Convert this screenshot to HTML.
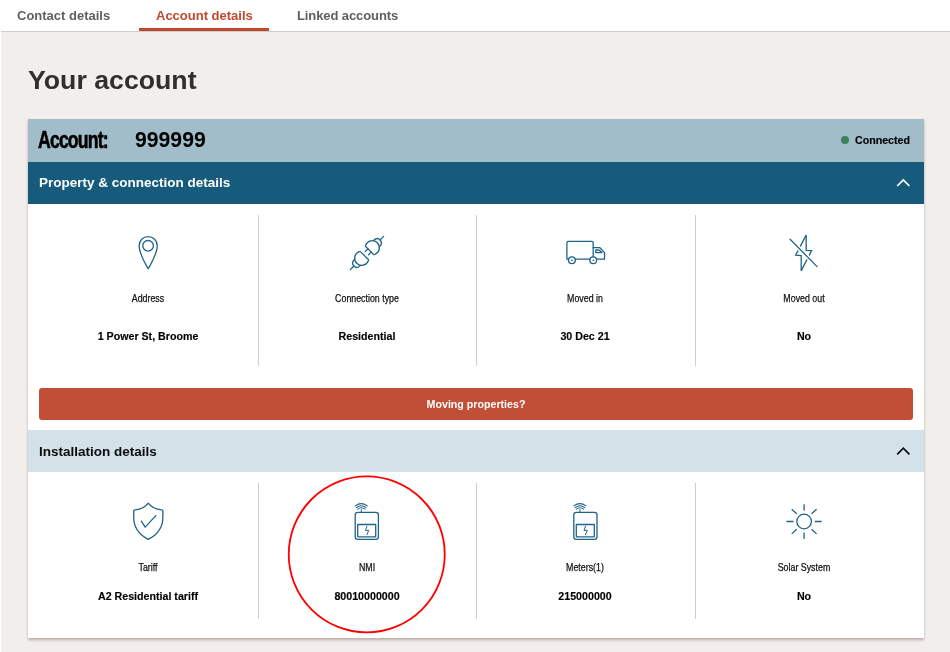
<!DOCTYPE html>
<html lang="en">
<head>
<meta charset="utf-8">
<title>Your account</title>
<style>
*{box-sizing:border-box;margin:0;padding:0}
html,body{width:950px;height:652px;overflow:hidden}
body{background:#f2eeeb;font-family:"Liberation Sans",Arial,sans-serif;color:#1a1a1a;position:relative}
.page{position:absolute;left:0;top:0;width:950px;height:652px;will-change:transform}
.nav{position:absolute;left:0;top:0;width:950px;height:32px;background:#fff;border-bottom:1px solid #cccfcf}
.nav a{position:absolute;top:1px;height:30px;line-height:30px;font-weight:bold;font-size:13px;color:#5e5f60;text-decoration:none;white-space:nowrap}
.nav a.active{color:#c04a30}
.nav .ul{position:absolute;left:139px;top:28px;width:130px;height:3px;background:#c04a30}
h1{position:absolute;left:28px;top:64px;font-size:26.7px;line-height:32px;font-weight:bold;color:#2f2f2f;white-space:nowrap}
.card{position:absolute;left:28px;top:119px;width:896px;height:519px;background:#fff;box-shadow:0 2px 2.5px rgba(70,30,30,.32)}
.acct{position:absolute;left:0;top:0;width:896px;height:43px;background:#a1bdca}
.acct .lbl{position:absolute;left:10px;top:9.1px;font-size:23px;line-height:24px;font-weight:bold;color:#000;transform-origin:0 50%;transform:scaleX(.768);white-space:nowrap;letter-spacing:-1.1px;-webkit-text-stroke:.6px #000}
.acct .num{position:absolute;left:107px;top:9px;font-size:21.2px;line-height:24px;font-weight:bold;color:#000}
.acct .dot{position:absolute;left:813px;top:17.3px;width:8.2px;height:8.2px;border-radius:50%;background:#3b825b}
.acct .st{position:absolute;right:14px;top:14px;font-size:10.67px;line-height:14px;font-weight:bold;color:#000;-webkit-text-stroke:.15px #000}
.hd{position:absolute;left:0;width:896px;height:42px;font-size:13.5px;line-height:42px;font-weight:bold;padding-left:11px}
.hd1{top:43px;background:#165b7c;color:#fff}
.hd2{top:311px;background:#d3e1e9;color:#0c0c0c;line-height:44px}
.hd svg{position:absolute;right:13px;top:15px}
.col{position:absolute;width:218px;text-align:center}
.col .t{position:absolute;left:0;width:100%;font-size:10.4px;line-height:12px;color:#111;transform:scaleX(.85);-webkit-text-stroke:.25px #111}
.col .v{position:absolute;left:0;width:100%;font-size:10.67px;line-height:14px;font-weight:bold;color:#000;-webkit-text-stroke:.15px #000}
.sep{position:absolute;width:1px;background:#c2d2d5}
.btn{position:absolute;left:11px;top:269px;width:874px;height:32px;background:#c14e36;border-radius:3px;color:#fff;font-weight:bold;font-size:10.67px;line-height:33px;text-align:center}
.ico{position:absolute;left:0;top:0}
.edge{position:absolute;left:0;top:0;width:1px;height:652px;background:#fff}
</style>
</head>
<body>
<div class="page">
<div class="nav">
  <a style="left:17px">Contact details</a>
  <a class="active" style="left:156px">Account details</a>
  <a style="left:297px;letter-spacing:-.1px">Linked accounts</a>
  <div class="ul"></div>
</div>
<div class="edge"></div>
<h1>Your account</h1>
<div class="card">
  <div class="acct">
    <span class="lbl">Account:</span><span class="num">999999</span>
    <span class="dot"></span><span class="st">Connected</span>
  </div>
  <div class="hd hd1">Property &amp; connection details
  </div>
  <div class="sep" style="left:230px;top:96px;height:151px"></div>
  <div class="sep" style="left:448px;top:96px;height:151px"></div>
  <div class="sep" style="left:667px;top:96px;height:151px"></div>

  <div class="col" style="left:11px;top:85px;height:174px"><div class="t" style="top:89px">Address</div><div class="v" style="top:125px">1 Power St, Broome</div></div>
  <div class="col" style="left:230px;top:85px;height:174px"><div class="t" style="top:89px">Connection type</div><div class="v" style="top:125px">Residential</div></div>
  <div class="col" style="left:448px;top:85px;height:174px"><div class="t" style="top:89px">Moved in</div><div class="v" style="top:125px">30 Dec 21</div></div>
  <div class="col" style="left:667px;top:85px;height:174px"><div class="t" style="top:89px">Moved out</div><div class="v" style="top:125px">No</div></div>

  <div class="btn">Moving properties?</div>

  <div class="hd hd2">Installation details
  </div>
  <div class="sep" style="left:230px;top:364px;height:136px"></div>
  <div class="sep" style="left:448px;top:364px;height:136px"></div>
  <div class="sep" style="left:667px;top:364px;height:136px"></div>

  <div class="col" style="left:11px;top:353px;height:165px"><div class="t" style="top:90px">Tariff</div><div class="v" style="top:117px">A2 Residential tariff</div></div>
  <div class="col" style="left:230px;top:353px;height:165px"><div class="t" style="top:90px">NMI</div><div class="v" style="top:117px">80010000000</div></div>
  <div class="col" style="left:448px;top:353px;height:165px"><div class="t" style="top:90px">Meters(1)</div><div class="v" style="top:117px">215000000</div></div>
  <div class="col" style="left:667px;top:353px;height:165px"><div class="t" style="top:90px">Solar System</div><div class="v" style="top:117px">No</div></div>
</div>

<svg class="ico" width="950" height="652" viewBox="0 0 950 652" fill="none" stroke="#1f6388" stroke-width="1.3" stroke-linecap="round" stroke-linejoin="round">
  <!-- chevrons -->
  <path d="M897.2 186 L903.3 179.9 L909.4 186" stroke="#fff" stroke-width="1.7" stroke-linecap="butt" stroke-linejoin="miter"/>
  <path d="M897.2 454.4 L903.3 448.2 L909.4 454.4" stroke="#0c0c0c" stroke-width="1.7" stroke-linecap="butt" stroke-linejoin="miter"/>
  <!-- pin -->
  <path d="M148.2 268.8 C144.5 262 139.1 253.5 139.1 245.7 A9.1 9.1 0 0 1 157.3 245.7 C157.3 253.5 151.9 262 148.2 268.8 Z"/>
  <circle cx="148.1" cy="245.8" r="5.3"/>
  <!-- plug -->
  <g transform="translate(367 253) rotate(-45)">
    <path d="M-23.5 0 L-18.5 0"/>
    <path d="M-13.6 -4.3 C-16.5 -4.3 -18.5 -2.6 -18.5 0 C-18.5 2.6 -16.5 4.3 -13.6 4.3"/>
    <path d="M-4.6 -6.5 Q-3.7 -6.5 -3.7 -5.6 L-3.7 5.6 Q-3.7 6.5 -4.6 6.5 A7.1 7.1 0 1 1 -4.6 -6.5 Z"/>
    <path d="M-0.3 -2.3 L3.7 -2.3 M-0.3 2.3 L3.7 2.3"/>
    <path d="M4.6 -6.5 Q3.7 -6.5 3.7 -5.6 L3.7 5.6 Q3.7 6.5 4.6 6.5 A7.1 7.1 0 1 0 4.6 -6.5 Z"/>
    <path d="M13.6 -4.3 C16.5 -4.3 18.5 -2.6 18.5 0 C18.5 2.6 16.5 4.3 13.6 4.3"/>
    <path d="M18.5 0 L23.5 0"/>
  </g>
  <!-- truck -->
  <path d="M568.6 259.2 L566.9 259.2 L566.9 242.9 Q566.9 241.4 568.4 241.4 L591.7 241.4 Q593.2 241.4 593.2 242.9 L593.2 256.8"/>
  <path d="M575.3 259.2 L589.8 259.2"/>
  <path d="M593.2 247.7 L599.9 247.7 L604.5 252.6 L604.5 259.2 L596.6 259.2"/>
  <path d="M595.8 250 L598.9 250 L601.9 252.6 L595.8 252.6 Z"/>
  <circle cx="571.9" cy="260.3" r="3.4"/><circle cx="593.2" cy="260.3" r="3.4"/>
  <circle cx="571.9" cy="260.3" r=".5" fill="#1f6388" stroke-width=".6"/><circle cx="593.2" cy="260.3" r=".5" fill="#1f6388" stroke-width=".6"/>
  <!-- bolt crossed -->
  <path d="M806.2 235.1 L806.2 250.3 L811.6 250.5 L801.2 270.9 L801.2 255.5 L795.7 255.2 Z" stroke-linejoin="miter"/>
  <path d="M790.1 239.3 L817.1 266.6" stroke="#fff" stroke-width="4.2" stroke-linecap="butt"/>
  <path d="M790.1 239.3 L817.1 266.6"/>
  <!-- shield -->
  <path d="M148.3 503.2 C151 507 156 509.5 161.5 509.8 Q162.9 509.9 162.9 511.3 L162.9 517 C162.9 527 157 535 148.3 539.3 C139.6 535 133.7 527 133.7 517 L133.7 511.3 Q133.7 509.9 135.1 509.8 C140.6 509.5 145.6 507 148.3 503.2 Z"/>
  <path d="M141.3 521.2 L145.2 527.1 L155.8 515.6"/>
  <!-- meter NMI -->
  <g>
    <rect x="355.2" y="512.3" width="23.2" height="27" rx="2.6"/>
    <rect x="357.7" y="524.5" width="18" height="12.3" rx=".4"/>
    <path d="M366.9 526.3 L365.4 530.4 L368.7 530.4 L366.9 534.7" stroke-width="1"/>
    <path d="M361.3 509.6 L361.3 512.3" stroke-width="1"/>
    <g stroke-width="1.1">
      <path d="M355.3 505.9 Q361.3 501.3 367.3 505.9"/>
      <path d="M356.5 507.6 Q361.3 503.8 366.1 507.6"/>
      <path d="M357.7 509.2 Q361.3 506.2 364.9 509.2"/>
    </g>
  </g>
  <!-- meter Meters(1) -->
  <g transform="translate(218.6 0)">
    <rect x="355.2" y="512.3" width="23.2" height="27" rx="2.6"/>
    <rect x="357.7" y="524.5" width="18" height="12.3" rx=".4"/>
    <path d="M366.9 526.3 L365.4 530.4 L368.7 530.4 L366.9 534.7" stroke-width="1"/>
    <path d="M361.3 509.6 L361.3 512.3" stroke-width="1"/>
    <g stroke-width="1.1">
      <path d="M355.3 505.9 Q361.3 501.3 367.3 505.9"/>
      <path d="M356.5 507.6 Q361.3 503.8 366.1 507.6"/>
      <path d="M357.7 509.2 Q361.3 506.2 364.9 509.2"/>
    </g>
  </g>
  <!-- highlight ring -->
  <circle cx="366.75" cy="554.4" r="78" stroke="#ff0000" stroke-width="1.8"/>
  <!-- sun -->
  <circle cx="804.1" cy="521.5" r="7.3"/>
  <path d="M804.1 504.2 V510.6 M804.1 532.4 V538.9 M786.5 521.5 H793.5 M814.8 521.5 H821.7 M791.7 509.2 L796.7 513.7 M816.6 509.2 L811.6 513.7 M791.7 533.9 L796.7 529.2 M816.6 533.9 L811.6 529.2" stroke-linecap="butt"/>
</svg>

</div>
</body>
</html>
